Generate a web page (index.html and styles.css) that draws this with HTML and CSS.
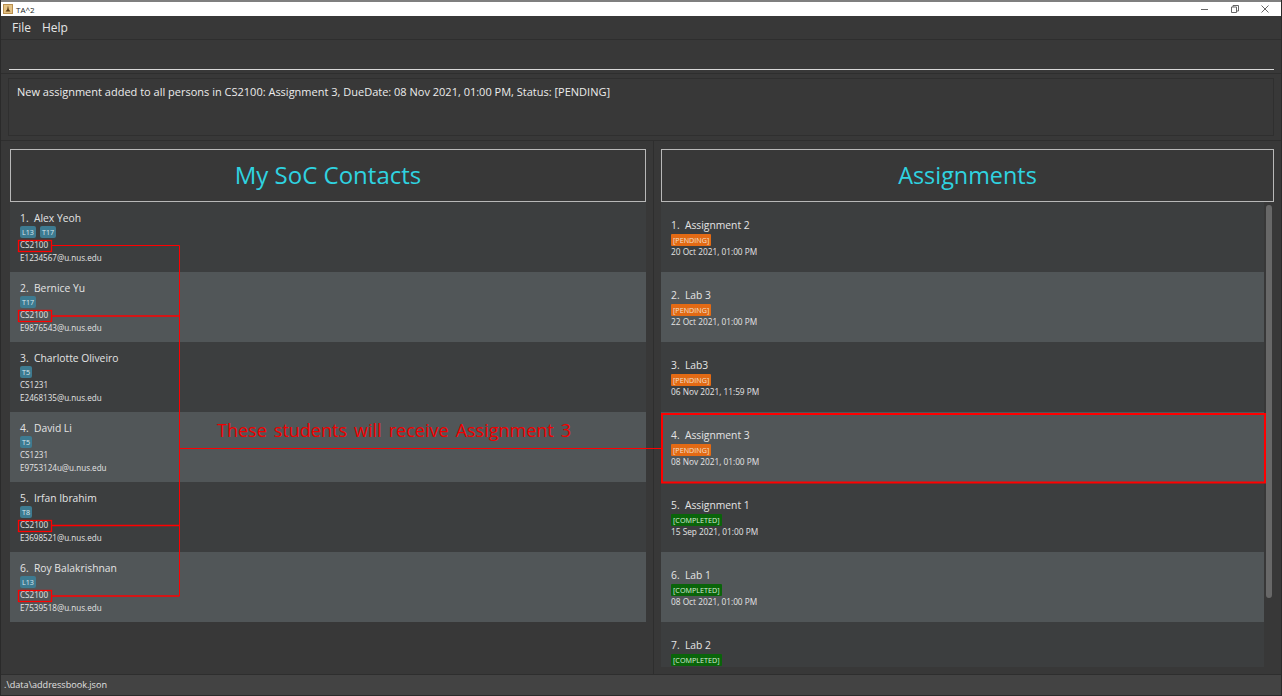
FILE: index.html
```html
<!DOCTYPE html>
<html lang="en">
<head>
    <meta charset="UTF-8">
    <title>TA^2</title>
    <link rel="stylesheet" href="styles.css">
</head>
<body>
    <div class="titlebar">
        <div class="title-left">
            <svg class="app-icon" width="10" height="10" viewBox="0 0 10 10">
                <rect width="10" height="10" fill="#b98f4e"/>
                <rect x="1" y="1" width="8" height="8" fill="#e4c284"/>
                <path d="M5 1.5 L5.8 5.5 L7.5 7.5 L2.5 7.5 L4.2 5.5 Z" fill="#5a3a10"/>
            </svg>
            <span>TA^2</span>
        </div>
        <div class="window-buttons">
            <svg width="8" height="8" viewBox="0 0 8 8"><path d="M0 4.5 H7" stroke="#666" fill="none"/></svg>
            <svg width="8" height="8" viewBox="0 0 8 8"><path d="M.5 2 H5.5 V7.5 H.5 Z M2 2 V.5 H7.5 V6 H5.5" stroke="#666" fill="none"/></svg>
            <svg width="8" height="8" viewBox="0 0 8 8"><path d="M.5 .5 L7.5 7.5 M7.5 .5 L.5 7.5" stroke="#666" fill="none"/></svg>
        </div>
    </div>

    <div class="menubar">
        <span>File</span>
        <span>Help</span>
    </div>

    <div class="command-box">
        <div class="command-line"></div>
    </div>

    <div class="result-wrap">
        <div class="result-box">New assignment added to all persons in CS2100: Assignment 3, DueDate: 08 Nov 2021, 01:00 PM, Status: [PENDING]</div>
    </div>

    <div class="main">
        <section class="pane pane-left">
            <h2 class="pane-title">My SoC Contacts</h2>
            <div class="list">
                <div class="card">
                    <div class="name">1.&nbsp; Alex Yeoh</div>
                    <div class="tags"><span class="tag">L13</span><span class="tag">T17</span></div>
                    <div class="line">CS2100</div>
                    <div class="line">E1234567@u.nus.edu</div>
                </div>
                <div class="card even">
                    <div class="name">2.&nbsp; Bernice Yu</div>
                    <div class="tags"><span class="tag">T17</span></div>
                    <div class="line">CS2100</div>
                    <div class="line">E9876543@u.nus.edu</div>
                </div>
                <div class="card">
                    <div class="name">3.&nbsp; Charlotte Oliveiro</div>
                    <div class="tags"><span class="tag">T5</span></div>
                    <div class="line">CS1231</div>
                    <div class="line">E2468135@u.nus.edu</div>
                </div>
                <div class="card even">
                    <div class="name">4.&nbsp; David Li</div>
                    <div class="tags"><span class="tag">T5</span></div>
                    <div class="line">CS1231</div>
                    <div class="line">E9753124u@u.nus.edu</div>
                </div>
                <div class="card">
                    <div class="name">5.&nbsp; Irfan Ibrahim</div>
                    <div class="tags"><span class="tag">T8</span></div>
                    <div class="line">CS2100</div>
                    <div class="line">E3698521@u.nus.edu</div>
                </div>
                <div class="card even">
                    <div class="name">6.&nbsp; Roy Balakrishnan</div>
                    <div class="tags"><span class="tag">L13</span></div>
                    <div class="line">CS2100</div>
                    <div class="line">E7539518@u.nus.edu</div>
                </div>
            </div>
        </section>

        <section class="pane pane-right">
            <h2 class="pane-title">Assignments</h2>
            <div class="list-wrap">
                <div class="list">
                    <div class="card task">
                        <div class="name">1.&nbsp; Assignment 2</div>
                        <div class="tags"><span class="status pending">[PENDING]</span></div>
                        <div class="line">20 Oct 2021, 01:00 PM</div>
                    </div>
                    <div class="card task even">
                        <div class="name">2.&nbsp; Lab 3</div>
                        <div class="tags"><span class="status pending">[PENDING]</span></div>
                        <div class="line">22 Oct 2021, 01:00 PM</div>
                    </div>
                    <div class="card task">
                        <div class="name">3.&nbsp; Lab3</div>
                        <div class="tags"><span class="status pending">[PENDING]</span></div>
                        <div class="line">06 Nov 2021, 11:59 PM</div>
                    </div>
                    <div class="card task even">
                        <div class="name">4.&nbsp; Assignment 3</div>
                        <div class="tags"><span class="status pending">[PENDING]</span></div>
                        <div class="line">08 Nov 2021, 01:00 PM</div>
                    </div>
                    <div class="card task">
                        <div class="name">5.&nbsp; Assignment 1</div>
                        <div class="tags"><span class="status completed">[COMPLETED]</span></div>
                        <div class="line">15 Sep 2021, 01:00 PM</div>
                    </div>
                    <div class="card task even">
                        <div class="name">6.&nbsp; Lab 1</div>
                        <div class="tags"><span class="status completed">[COMPLETED]</span></div>
                        <div class="line">08 Oct 2021, 01:00 PM</div>
                    </div>
                    <div class="card task">
                        <div class="name">7.&nbsp; Lab 2</div>
                        <div class="tags"><span class="status completed">[COMPLETED]</span></div>
                    </div>
                </div>
                <div class="scrollbar"><div class="thumb"></div></div>
            </div>
        </section>
    </div>

    <div class="statusbar">.\data\addressbook.json</div>

    <!-- red notes drawn on top of the screenshot -->
    <svg class="notes" width="1282" height="696" viewBox="0 0 1282 696">
        <g fill="none" stroke="#ff0000">
            <rect x="18.5" y="240.5" width="33" height="11" stroke-width="1.3"/>
            <rect x="18.5" y="310.5" width="33" height="11" stroke-width="1.3"/>
            <rect x="18.5" y="520.5" width="33" height="11" stroke-width="1.3"/>
            <rect x="18.5" y="590.5" width="33" height="11" stroke-width="1.3"/>
            <path d="M51 245.5 H179.5 V596"/>
            <path d="M51 316 H179.5 M51 525.5 H179.5 M51 596 H179.5" stroke-width="1.5"/>
            <path d="M180 448.5 H662"/>
            <rect x="662" y="414" width="603" height="68.5" stroke-width="2"/>
        </g>
    </svg>
    <div class="note-text">These students will receive Assignment 3</div>
</body>
</html>
```

FILE: styles.css
```css
/* TA^2 window */
html, body {
    margin: 0;
    padding: 0;
}
body {
    width: 1282px;
    height: 696px;
    box-sizing: border-box;
    overflow: hidden;
    position: relative;
    display: flex;
    flex-direction: column;
    background-color: #383838;
    border-left: 1px solid #2a2a2a;
    border-right: 1px solid #2a2a2a;
    border-bottom: 1px solid #2a2a2a;
    font-family: "Open Sans", "Noto Sans", sans-serif;
    color: #e0e0e0;
}
.titlebar {
    height: 14px;
    border-top: 2px solid #7f7f7f;
    background-color: #fff;
    display: flex;
    justify-content: space-between;
    align-items: center;
    color: #222;
    font-size: 8px;
    flex-shrink: 0;
}
.title-left {
    display: flex;
    align-items: center;
    gap: 3px;
    padding-left: 2px;
}
.window-buttons {
    display: flex;
    gap: 22px;
    padding-right: 12px;
}
.menubar {
    height: 23px;
    flex-shrink: 0;
    display: flex;
    align-items: center;
    gap: 11px;
    padding-left: 11px;
    font-size: 12px;
    color: #e6e6e6;
    border-bottom: 1px solid #2e2e2e;
}
.command-box {
    height: 33px;
    flex-shrink: 0;
    padding: 0 7px 0 8px;
    border-bottom: 1px solid #2e2e2e;
    display: flex;
    flex-direction: column;
    justify-content: flex-end;
}
.command-line {
    height: 1px;
    background-color: #d8d8d8;
    margin-bottom: 3px;
}
.result-wrap {
    height: 67px;
    flex-shrink: 0;
    padding: 4px 7px 0;
    border-bottom: 1px solid #2e2e2e;
    box-sizing: border-box;
}
.result-box {
    height: 58px;
    box-sizing: border-box;
    border: 1px solid #2f2f2f;
    padding: 5px 8px;
    font-size: 11px;
    line-height: 15px;
    color: #ececec;
}
.main {
    flex: 1;
    display: flex;
    min-height: 0;
    border-bottom: 1px solid #2e2e2e;
}
.pane {
    box-sizing: border-box;
    display: flex;
    flex-direction: column;
    padding-top: 8px;
}
.pane-left {
    width: 653px;
    padding-left: 9px;
    padding-right: 7px;
    border-right: 1px solid #2e2e2e;
}
.pane-right {
    flex: 1;
    padding-left: 7px;
    padding-right: 7px;
    padding-bottom: 7px;
}
.pane-title {
    margin: 0;
    height: 53px;
    flex-shrink: 0;
    box-sizing: border-box;
    border: 1px solid #b8b8b8;
    display: flex;
    align-items: center;
    justify-content: center;
    padding-bottom: 2px;
    font-size: 24px;
    font-weight: 400;
    color: #2fd3e0;
}
.pane-right .pane-title {
    font-size: 23.4px;
}
.list-wrap {
    flex: 1;
    min-height: 0;
    display: flex;
    gap: 2px;
}
.list {
    flex: 1;
    min-height: 0;
    overflow: hidden;
    background-color: #3c3e3f;
}
.pane-left .list {
    background-color: #383838;
}
.card {
    height: 70px;
    box-sizing: border-box;
    padding: 9px 10px 0;
    background-color: #3c3e3f;
    font-size: 8.1px;
    color: #e4e4e4;
}
.card.even {
    background-color: #515658;
}
.task {
    padding-top: 16px;
    font-size: 8.3px;
}
.name {
    font-size: 10.3px;
    line-height: 14px;
    color: #e4e4e4;
}
.tags {
    display: flex;
    gap: 4px;
    height: 12px;
    margin-top: 1px;
    align-items: center;
}
.task .tags {
    margin-top: 2px;
    margin-bottom: -1px;
}
.tag {
    background-color: #3e7b91;
    color: #d8e8ee;
    border-radius: 2px;
    padding: 0 2px;
    font-size: 7.2px;
    line-height: 12px;
}
.status {
    border-radius: 1px;
    padding: 0 2px;
    font-size: 7.2px;
    line-height: 12px;
    color: #f0e0d0;
}
.pending {
    background-color: #e36a14;
}
.completed {
    background-color: #0a640a;
    color: #d8f0d8;
}
.line {
    line-height: 13px;
}
.scrollbar {
    width: 8px;
    padding-top: 3px;
}
.thumb {
    width: 6px;
    height: 393px;
    border-radius: 3px;
    background-color: #686868;
}
.statusbar {
    height: 20px;
    flex-shrink: 0;
    line-height: 20px;
    padding-left: 3px;
    background-color: #434343;
    font-size: 9.1px;
    color: #e0e0e0;
}
.notes {
    position: absolute;
    top: 0;
    left: -1px;
}
.note-text {
    position: absolute;
    left: 216px;
    top: 418px;
    font-size: 18px;
    line-height: 24px;
    word-spacing: 2.4px;
    color: #f00000;
    white-space: nowrap;
}
```
